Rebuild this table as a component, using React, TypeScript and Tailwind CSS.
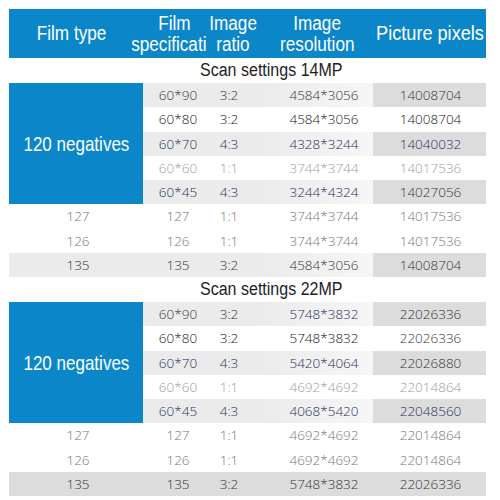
import React from 'react';

type Tone = 'dark' | 'black' | 'navy' | 'light' | 'gray';

const toneClass: Record<Tone, string> = {
  dark: 'text-[#363636]',
  black: 'text-[#161616]',
  navy: 'text-[#27315f]',
  light: 'text-[#9d9d9d]',
  gray: 'text-[#777777]',
};

type Row = {
  spec: string;
  ratio: string;
  res: string;
  px: string;
  tones: [Tone, Tone, Tone, Tone];
  shaded?: boolean;
};

type Section = {
  title: string;
  negatives: Row[];
  others: { name: string; row: Row }[];
  lastDark?: boolean;
};

const sections: Section[] = [
  {
    title: 'Scan settings 14MP',
    negatives: [
      { spec: '60*90', ratio: '3:2', res: '4584*3056', px: '14008704', tones: ['dark', 'dark', 'dark', 'dark'], shaded: true },
      { spec: '60*80', ratio: '3:2', res: '4584*3056', px: '14008704', tones: ['black', 'black', 'black', 'black'] },
      { spec: '60*70', ratio: '4:3', res: '4328*3244', px: '14040032', tones: ['navy', 'navy', 'navy', 'navy'], shaded: true },
      { spec: '60*60', ratio: '1:1', res: '3744*3744', px: '14017536', tones: ['light', 'light', 'light', 'light'] },
      { spec: '60*45', ratio: '4:3', res: '3244*4324', px: '14027056', tones: ['navy', 'navy', 'navy', 'dark'], shaded: true },
    ],
    others: [
      { name: '127', row: { spec: '127', ratio: '1:1', res: '3744*3744', px: '14017536', tones: ['gray', 'gray', 'gray', 'gray'] } },
      { name: '126', row: { spec: '126', ratio: '1:1', res: '3744*3744', px: '14017536', tones: ['gray', 'gray', 'gray', 'gray'] } },
      { name: '135', row: { spec: '135', ratio: '3:2', res: '4584*3056', px: '14008704', tones: ['dark', 'dark', 'dark', 'dark'], shaded: true } },
    ],
  },
  {
    title: 'Scan settings 22MP',
    negatives: [
      { spec: '60*90', ratio: '3:2', res: '5748*3832', px: '22026336', tones: ['dark', 'dark', 'navy', 'dark'], shaded: true },
      { spec: '60*80', ratio: '3:2', res: '5748*3832', px: '22026336', tones: ['black', 'black', 'black', 'dark'] },
      { spec: '60*70', ratio: '4:3', res: '5420*4064', px: '22026880', tones: ['navy', 'navy', 'navy', 'dark'], shaded: true },
      { spec: '60*60', ratio: '1:1', res: '4692*4692', px: '22014864', tones: ['light', 'light', 'light', 'light'] },
      { spec: '60*45', ratio: '4:3', res: '4068*5420', px: '22048560', tones: ['navy', 'navy', 'navy', 'navy'], shaded: true },
    ],
    others: [
      { name: '127', row: { spec: '127', ratio: '1:1', res: '4692*4692', px: '22014864', tones: ['gray', 'gray', 'gray', 'gray'] } },
      { name: '126', row: { spec: '126', ratio: '1:1', res: '4692*4692', px: '22014864', tones: ['gray', 'gray', 'gray', 'gray'] } },
      { name: '135', row: { spec: '135', ratio: '3:2', res: '5748*3832', px: '22026336', tones: ['dark', 'dark', 'dark', 'dark'], shaded: true } },
    ],
    lastDark: true,
  },
];

const cell = 'h-[24.25px] flex items-center justify-center whitespace-nowrap';

// narrow (Arial Narrow–like) text made from Liberation Sans
function Narrow({ children, className = '' }: { children: React.ReactNode; className?: string }) {
  return <span className={`inline-block whitespace-nowrap font-['Liberation_Sans',sans-serif] ${className}`}>{children}</span>;
}

function DataCells({ row, dark }: { row: Row; dark?: boolean }) {
  const base = row.shaded ? (dark ? 'bg-[#dcdcdc]' : 'bg-[#ebebeb]') : '';
  const resBg = row.shaded ? (dark ? 'bg-[#dcdcdc]' : 'bg-gradient-to-r from-[#ebebeb] to-[#f6f6f6]') : '';
  const pxBg = row.shaded ? 'bg-[#dcdcdc]' : '';
  return (
    <>
      <div className={`${cell} ${base} ${toneClass[row.tones[0]]} pl-[8px]`}>{row.spec}</div>
      <div className={`${cell} ${base} ${toneClass[row.tones[1]]} pr-[8px]`}>{row.ratio}</div>
      <div className={`${cell} ${resBg} ${toneClass[row.tones[2]]} pl-[14px]`}>{row.res}</div>
      <div className={`${cell} ${pxBg} ${toneClass[row.tones[3]]} pl-[2px]`}>{row.px}</div>
    </>
  );
}

function ScanSection({ section }: { section: Section }) {
  return (
    <div>
      <div className="h-[25px] flex items-center pl-[191px] text-[#1e1e1e]">
        <Narrow className="text-[18px] scale-x-[0.89] origin-left">{section.title}</Narrow>
      </div>
      <div className="grid grid-cols-[134px_62px_56px_112px_113px] text-[13.5px] font-[350]">
        <div className="row-span-5 bg-[#0b87c9] flex items-center justify-center text-white">
          <Narrow className="text-[21px] scale-x-[0.81] font-normal">120 negatives</Narrow>
        </div>
        {section.negatives.map((r, i) => (
          <DataCells key={i} row={r} />
        ))}
        {section.others.map((o, i) => {
          const last = i === section.others.length - 1;
          const dark = last && section.lastDark;
          const bg = o.row.shaded ? (dark ? 'bg-[#dcdcdc]' : 'bg-[#ebebeb]') : '';
          return (
            <React.Fragment key={o.name}>
              <div className={`${cell} ${bg} ${toneClass[o.row.tones[0]]} pl-[4px]`}>{o.name}</div>
              <DataCells row={o.row} dark={dark} />
            </React.Fragment>
          );
        })}
      </div>
    </div>
  );
}

export default function App() {
  return (
    <div className="w-[500px] h-[500px] bg-white pt-[9px] pl-[9px] overflow-hidden font-['Open_Sans',sans-serif]">
      <div className="w-[477px]">
        <div className="h-[49px] bg-[#0b87c9] grid grid-cols-[134px_62px_56px_112px_113px] text-white text-[19.5px] leading-[21px]">
          <div className="flex items-center justify-center pr-[8px]">
            <Narrow className="scale-x-[0.88]">Film type</Narrow>
          </div>
          <div className="flex flex-col items-center justify-center">
            <Narrow className="scale-x-[0.88]">Film</Narrow>
            <Narrow className="scale-x-[0.88] -ml-[10px]">specificati</Narrow>
          </div>
          <div className="flex flex-col items-center justify-center">
            <Narrow className="scale-x-[0.88]">Image</Narrow>
            <Narrow className="scale-x-[0.88]">ratio</Narrow>
          </div>
          <div className="flex flex-col items-center justify-center">
            <Narrow className="scale-x-[0.88]">Image</Narrow>
            <Narrow className="scale-x-[0.88]">resolution</Narrow>
          </div>
          <div className="flex items-center justify-center">
            <Narrow className="scale-x-[0.93]">Picture pixels</Narrow>
          </div>
        </div>
        {sections.map((s) => (
          <ScanSection key={s.title} section={s} />
        ))}
      </div>
    </div>
  );
}
